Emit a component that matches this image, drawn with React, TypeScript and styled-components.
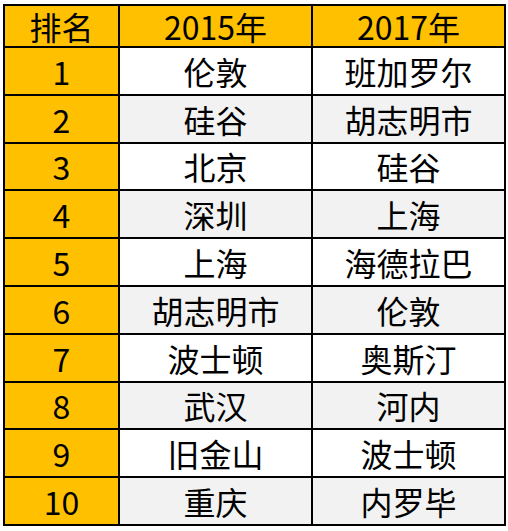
import React, { FC } from 'react'
import styled, { createGlobalStyle } from 'styled-components'

const GlobalStyle = createGlobalStyle`
  html,
  body {
    margin: 0;
    padding: 0;
    background: #ffffff;
  }

  body {
    font-family: "Noto Sans CJK SC", "Noto Sans", sans-serif;
  }
`

const Sheet = styled.div`
  padding: 4px 0 0 3px;
`

const Table = styled.div`
  display: grid;
  grid-template-columns: 113px 191px 191px;
  grid-template-rows: 40px repeat(10, 45.8px);
  gap: 2px;
  width: max-content;
  border: 2px solid #000000;
  background: #000000;
`

const Cell = styled.div<{ $tone: 'head' | 'white' | 'grey' }>`
  display: flex;
  align-items: center;
  justify-content: center;
  font-size: 32px;
  font-weight: 400;
  line-height: 1;
  color: #000000;
  background: ${({ $tone }) =>
    $tone === 'head' ? '#ffc000' : $tone === 'grey' ? '#f2f2f2' : '#ffffff'};
`

const rows: [string, string][] = [
  ['伦敦', '班加罗尔'],
  ['硅谷', '胡志明市'],
  ['北京', '硅谷'],
  ['深圳', '上海'],
  ['上海', '海德拉巴'],
  ['胡志明市', '伦敦'],
  ['波士顿', '奥斯汀'],
  ['武汉', '河内'],
  ['旧金山', '波士顿'],
  ['重庆', '内罗毕']
]

const App: FC = () => {
  return (
    <>
      <GlobalStyle />
      <Sheet>
        <Table>
          <Cell $tone="head">排名</Cell>
          <Cell $tone="head">2015年</Cell>
          <Cell $tone="head">2017年</Cell>
          {rows.map(([a, b], i) => {
            const tone = i % 2 === 1 ? 'grey' : 'white'
            return (
              <React.Fragment key={i}>
                <Cell $tone="head">{i + 1}</Cell>
                <Cell $tone={tone}>{a}</Cell>
                <Cell $tone={tone}>{b}</Cell>
              </React.Fragment>
            )
          })}
        </Table>
      </Sheet>
    </>
  )
}

export default App
